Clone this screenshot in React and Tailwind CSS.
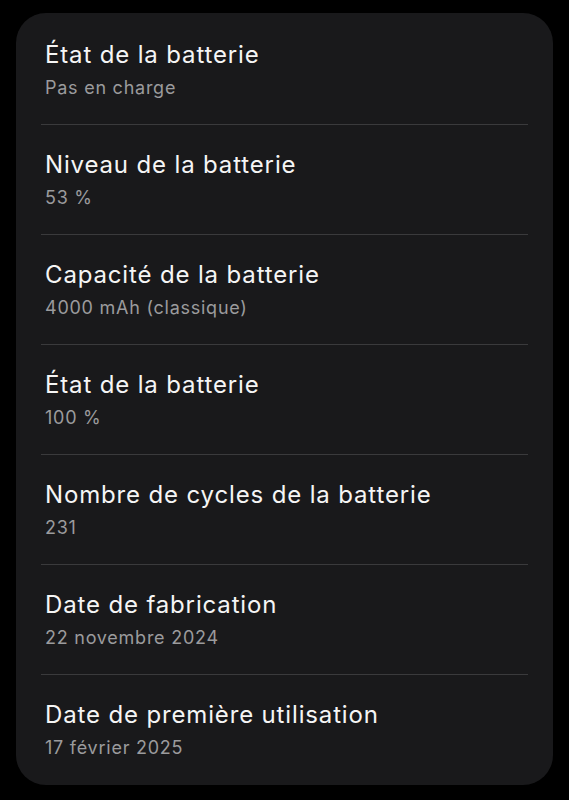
import React from 'react';

const ROWS = [
  { title: 'État de la batterie', value: 'Pas en charge' },
  { title: 'Niveau de la batterie', value: '53 %' },
  { title: 'Capacité de la batterie', value: '4000 mAh (classique)' },
  { title: 'État de la batterie', value: '100 %' },
  { title: 'Nombre de cycles de la batterie', value: '231' },
  { title: 'Date de fabrication', value: '22 novembre 2024' },
  { title: 'Date de première utilisation', value: '17 février 2025' },
];

export default function App() {
  return (
    <div
      className="min-h-[800px] w-full bg-black pt-[13px] px-[16px]"
      style={{ fontFamily: 'Inter, "Noto Sans", sans-serif' }}
    >
      <div className="w-[537px] rounded-[30px] bg-[#19191b] pt-[2px] pb-[1px]">
        {ROWS.map((row, i) => (
          <div key={i}>
            {i > 0 && <div className="mx-[25px] h-px bg-[#3a3a3c]" />}
            <div className="px-[29px] pt-[25px] pb-[24px]">
              <div className="text-[24px] leading-[30px] tracking-[0.85px] text-[#f5f5f5]">{row.title}</div>
              <div className="mt-[6px] text-[18px] leading-[24px] tracking-[0.75px] text-[#9b9b9d]">{row.value}</div>
            </div>
          </div>
        ))}
      </div>
    </div>
  );
}
